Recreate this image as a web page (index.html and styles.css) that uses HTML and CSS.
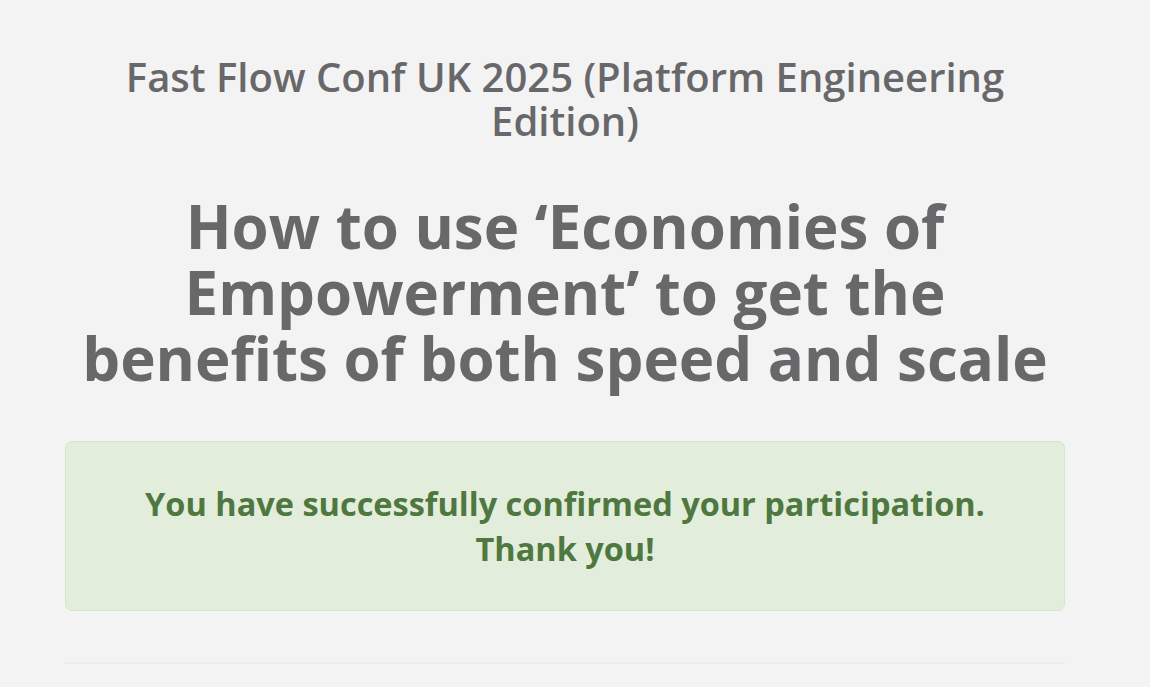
FILE: index.html
```html
<!DOCTYPE html>
<html>
<head>
<meta charset="utf-8">
<link rel="stylesheet" href="styles.css">
</head>
<body>
<div class="page">
  <div class="container">
    <h2 class="event">Fast Flow Conf UK 2025 (Platform Engineering Edition)</h2>
    <h1 class="talk">How to use ‘Economies of Empowerment’ to get the benefits of both speed and scale</h1>
    <div class="alert">
      <p>You have successfully confirmed your participation.<br>Thank you!</p>
    </div>
    <hr class="divider">
  </div>
</div>
</body>
</html>
```
FILE: styles.css
```css
html, body {
  margin: 0;
  padding: 0;
  background: #f3f3f3;
  font-family: "Open Sans", "Noto Sans", sans-serif;
}
.page {
  padding-left: 65px;
  padding-top: 55px;
}
.container {
  width: 1000px;
  text-align: center;
}
.event {
  margin: 0;
  font-size: 40px;
  font-weight: 600;
  line-height: 44px;
  color: #68686a;
}
.talk {
  margin: 50px 0 0;
  font-size: 60px;
  font-weight: 700;
  line-height: 66px;
  color: #68686a;
}
.alert {
  margin-top: 50px;
  height: 170px;
  background: #e2eedb;
  border: 1px solid #d5e6c8;
  border-radius: 7px;
  display: flex;
  align-items: center;
  justify-content: center;
  box-sizing: border-box;
}
.alert p {
  margin: 0;
  font-size: 32.5px;
  font-weight: 700;
  line-height: 45px;
  color: #4e7840;
}
.divider {
  margin: 51px 0 0;
  border: 0;
  height: 2px;
  background: #ececec;
}
```
